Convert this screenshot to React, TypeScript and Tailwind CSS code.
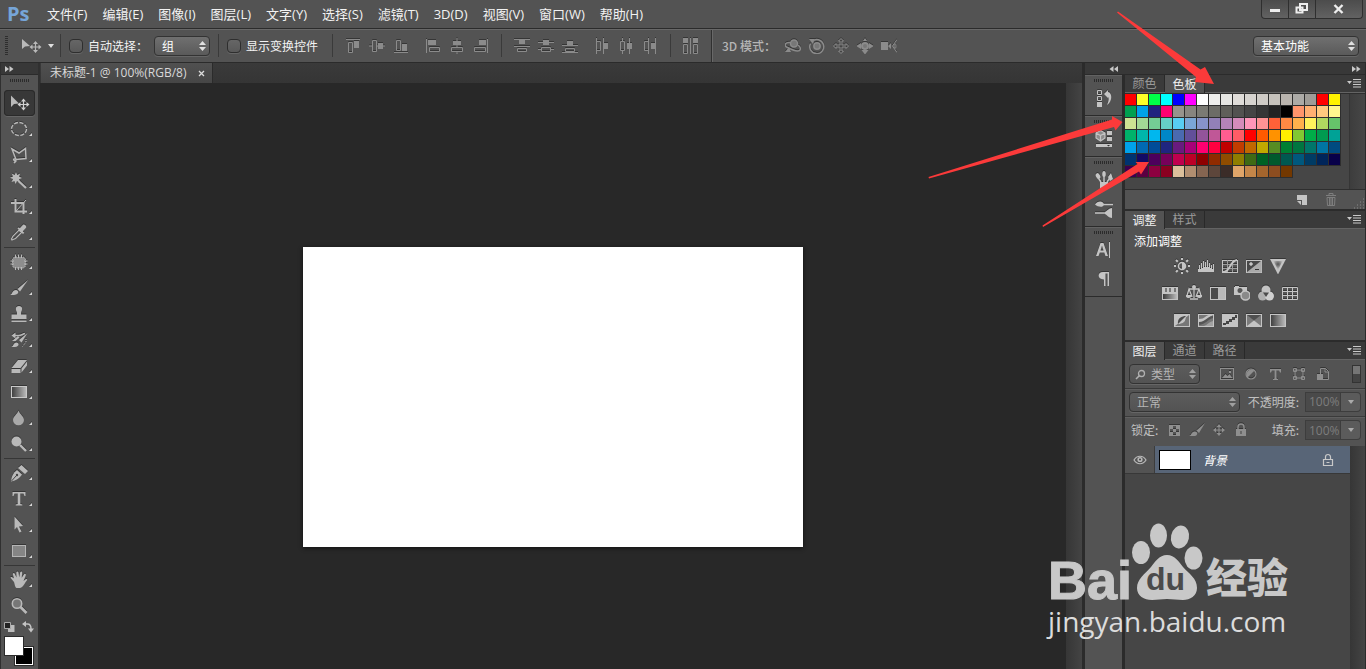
import { useState, type ReactNode } from 'react';

const FONT = "font-['Open_Sans','Noto_Sans_CJK_SC',sans-serif]";
const CJK = "font-['Noto_Sans_CJK_SC','Open_Sans',sans-serif]";

const MENUS = ['文件(F)', '编辑(E)', '图像(I)', '图层(L)', '文字(Y)', '选择(S)', '滤镜(T)', '3D(D)', '视图(V)', '窗口(W)', '帮助(H)'];

const SWATCHES = `
ff0000 ffff28 00ff48 00ffff 0000ff ff00ff ffffff ededeb e6e6e3 dfdcd8 d6d3cf cfcbc6 c6c2bc b9b4ae acaaa6 9f9c97 ff0000 fff200
00a050 00a2e8 21217f ff0070 96938c 87857f 7a7a73 6c6c66 5f5f5a 525250 454545 363636 232323 000000 ff956c ffb072 ffc97f fff68f
cde393 a2d896 74cc95 66cfc6 58cef2 7aa6d6 8793c9 9280b8 b583b8 d58bba ff96b9 ff9394 ff6138 ff8a44 ffb04c fff25c afd860 66c46a
00b26a 00b6ab 00b7ee 0087c8 4a6ab0 624f9a 93549a c05797 ff5d90 ff5c66 ff0000 ff5a00 ff9200 ffee00 82c832 00ad48 009a50 00a296
00a2ea 0069b2 004c99 1f2580 691b7e a80078 ff0070 ff0040 c00000 c23c00 c16700 c1a900 568c23 007f32 007540 00756a 0075a4 004b80
003370 130a64 4d005c 77005a c0004e bd0027 8e0000 902b00 8f4c00 8f7e00 3f6a14 006124 00592d 005850 00587d 003b64 00255a 080049
3c0050 5a0042 8c0040 8a0020 dcc09c b18e70 856551 5d463b 3b2c28 e0a569 c48649 a4652d 8c4d20 733800`
  .trim()
  .split(/\s+/)
  .map((c) => '#' + c);

function Svg({ w, h, children, className = '' }: { w: number; h: number; children: ReactNode; className?: string }) {
  return (
    <svg width={w} height={h} viewBox={`0 0 ${w} ${h}`} fill="none" stroke="none" className={`shrink-0 ${className}`} aria-hidden="true">
      {children}
    </svg>
  );
}

const G = '#b9b9b9';

const crossArrows = (cx: number, cy: number, c: string) => (
  <g transform={`translate(${cx} ${cy})`}>
    <path d="M0-4V4M-4 0H4" stroke={c} strokeWidth="1.200" />
    <path d="M0-6 2.500-3h-5ZM0 6 2.500 3h-5ZM-6 0-3-2.500v5ZM6 0 3-2.500v5Z" fill={c} />
  </g>
);

type Tool = { name: string; icon: ReactNode; fly?: boolean };

const GROUPS: Tool[][] = [
  [
    { name: '移动工具', fly: false, icon: <><path d="M7 5.500V17l3-3 5-.5Z" fill={G} />{crossArrows(19.500, 14.500, '#d0d0d0')}</> },
    { name: '椭圆选框工具', icon: <ellipse cx="15" cy="13" rx="7.500" ry="6.500" stroke={G} strokeWidth="1.400" strokeDasharray="4 1.500" /> },
    { name: '多边形套索工具', icon: <><path d="M8 7 15 11l6.500-4.500.5 10-10 1ZM12 17c-2.500-1-3 1-1.500 1.500S13 18 10 21" stroke={G} strokeWidth="1.500" /></> },
    { name: '魔棒工具', icon: <><path d="m12 4 1.200 3 3-1.500L15 8.500l3 1.500-3 1.200 1 3-3-1.200L11.500 16l-1-3-3 1 1.500-3-3-1.300 3-1.200-1.300-3 3 1.500Z" fill={G} /><path d="m14.500 13 7.500 7" stroke={G} strokeWidth="2.200" /></> },
    { name: '裁剪工具', icon: <><path d="M11.500 5v12.500H23M7 9h12.500v11" stroke={G} strokeWidth="2" /><path d="m12 17 10-11" stroke={G} /></> },
    { name: '吸管工具', icon: <><path d="M9 19.500 8 20l-.5-1 1.500-3 6-6 2.500 2.500-6 6Z" stroke={G} strokeWidth="1.200" /><path d="m13.500 8.500 5.500 5.500 1.300-1.300-1.500-1.500 3.200-3.500c1-1.500-1.500-4-3-3l-3.200 3.500-1-1Z" fill={G} /></> },
  ],
  [
    { name: '修补工具', icon: <><rect x="8.500" y="8" width="13" height="11" rx="3" fill="#8d8d8d" stroke={G} strokeDasharray="1.500 1" /><path d="M11.500 5.500V9m3-3.500V9m3-3.500V9m-6 9v3m3-3v3m3-3v3M6.500 12H10m-3.500 3H10m10-3h3.500m-3.500 3h3.500" stroke={G} /></> },
    { name: '画笔工具', icon: <><path d="M24 5 13.500 14l2.500 2.500Z" fill={G} /><path d="M6 20c2.500-.5 2-5 6-5 3 .5 3 3.500 0 4.500-2 .7-4 .7-6 .5Z" fill={G} /></> },
    { name: '仿制图章工具', icon: <path d="M15 5c4 0 3.500 4 2 6v2.500h5.500V18h-15v-4.500H13V11c-1.500-2-2-6 2-6ZM7.500 19.500h15V21h-15Z" fill={G} /> },
    { name: '历史记录画笔工具', icon: <><path d="M23.500 6 15 13l2.500 2.500ZM7 20c3-.5 2-4.500 5.500-4.500 3 .5 2.500 3.500 0 4.200-2 .5-4 .5-5.500.3Z" fill={G} /><path d="M9 8.500h5.500c3 0 4-1.500 6.500-2" stroke={G} strokeWidth="1.500" /><path d="M11.500 5.500v6L7.500 8.500ZM14 9l1.500 1.500-4 3.500H8Z" fill={G} /><path d="M22 12v3l-3.500 4.500" stroke={G} strokeDasharray="1 1" /></> },
    { name: '橡皮擦工具', icon: <><path d="M7.500 15 14 7h9l-6.500 8ZM7.500 16h9v4h-9ZM17.500 15.500 23 8.500v4l-5.500 7Z" fill={G} /></> },
    { name: '渐变工具', icon: <rect x="7.500" y="7.500" width="15" height="11" fill="url(#gradH)" stroke="#c9c9c9" /> },
    { name: '模糊工具', icon: <path d="M14.500 5.500c1.500 4 5.500 6 5.500 9.500a5.500 5.200 0 0 1-11 0c0-3.500 4-5.500 5.500-9.500Z" fill="#a9a9a9" /> },
    { name: '减淡工具', icon: <><circle cx="12.500" cy="10.500" r="5" fill={G} /><path d="m16 14 6 6" stroke={G} strokeWidth="2.400" /></> },
  ],
  [
    { name: '钢笔工具', icon: <><path d="M7 21.500c.5-5 2-8.500 6-11.500l5 4.500c-2.500 3.500-5.500 6-11 7Z" fill={G} /><path d="m7.500 21 5-5.500" stroke="#444" /><circle cx="13" cy="15" r="1.200" fill="#444" /><path d="m14 8 3.500-3 6.500 6-3 3Z" fill={G} /></> },
    { name: '横排文字工具', icon: <path d="M8.500 6h13v4h-1l-1-2.500h-3.200V18l2 .5v1h-6.600v-1l2-.5V7.500h-3.200l-1 2.500h-1Z" fill={G} /> },
    { name: '路径选择工具', icon: <path d="M10.500 4.500v13l2.500-2.500 2.500 5.500 2-1-2.500-5 4-.5Z" fill={G} /> },
    { name: '矩形工具', icon: <rect x="8.500" y="7.500" width="13" height="11" fill="#858585" stroke="#b5b5b5" /> },
  ],
  [
    { name: '抓手工具', icon: <path d="M10 15 6.500 10.800c.3-1.300 1.500-1 3.500.7L8.800 7c.5-1.400 1.700-1 2.200.3l1.500 3.200-.2-5c.3-1.400 1.900-1.400 2.200 0l.7 4.700 1-5c.6-1.200 2-.8 2 .5l-.5 5L20.200 7c1-.8 2 0 1.600 1.200L19.500 14l2.500-2c1.200-.2 1.500.5.8 1.500-2.300 2.500-3 6.500-6.800 7.500h-3.500c-1.500-.5-1.500-3-2.500-6Z" fill={G} /> },
    { name: '缩放工具', fly: false, icon: <><circle cx="13" cy="10.500" r="4.700" fill="#777" stroke={G} strokeWidth="1.600" /><path d="m16.500 14 6 6" stroke={G} strokeWidth="2.600" /></> },
  ],
];

const RIM = 'drop-shadow-[0_-1px_0_#363636]';

function ToolButton({ tool, active, onClick }: { tool: Tool; active: boolean; onClick: () => void }) {
  return (
    <button type="button" aria-label={tool.name} onClick={onClick} className={`block h-[26px] w-[31px] rounded-sm ${active ? 'bg-[#383838] shadow-[inset_0_0_0_1px_#2a2a2a,0_1px_0_#666]' : ''}`}>
      <Svg w={31} h={26} className={RIM}>
        {tool.icon}
        {tool.fly !== false && <path d="M28 17v3h-3Z" fill="#d8d8d8" />}
      </Svg>
    </button>
  );
}

const DOTS = 'bg-[repeating-linear-gradient(90deg,#2b2b2b_0_1px,transparent_1px_2px)]';

function Grip() {
  return <div className={`mx-auto h-[3px] w-[19px] ${DOTS}`} />;
}

function Chevrons({ left = false }: { left?: boolean }) {
  return (
    <Svg w={9} h={6} className={left ? 'rotate-180' : ''}>
      <path d="M0 0 4 3 0 6ZM4.500 0l4 3-4 3Z" fill="#c8c8c8" />
    </Svg>
  );
}

function Sep() {
  return <div className="h-[23px] w-px shrink-0 bg-[#3a3a3a]" />;
}

function UpDown({ dim = false }: { dim?: boolean }) {
  return (
    <Svg w={7} h={10} className="pointer-events-none absolute right-1 top-1/2 -translate-y-1/2">
      <path d="M3.500 0 7 4H0ZM0 6h7L3.500 10Z" fill={dim ? '#a0a0a0' : '#e0e0e0'} />
    </Svg>
  );
}

function PickList({ label, options, className, dim = false }: { label: string; options: string[]; className: string; dim?: boolean }) {
  return (
    <div className="relative shrink-0">
      <select aria-label={label} className={`block h-5 appearance-none rounded-sm border border-[#333] bg-linear-to-b text-[12px] leading-4 shadow-[0_1px_0_#666] outline-none ${CJK} ${dim ? 'from-[#5c5c5c] to-[#535353] text-[#b5b5b5]' : 'from-[#707070] to-[#5a5a5a] text-white'} ${className}`}>
        {options.map((o) => <option key={o}>{o}</option>)}
      </select>
      <UpDown dim={dim} />
    </div>
  );
}

function Check({ id, label }: { id: string; label: string }) {
  return (
    <div className="flex items-center gap-[5px]">
      <input id={id} type="checkbox" className="size-[14px] appearance-none rounded-sm border border-[#2e2e2e] bg-linear-to-b from-[#666] to-[#595959] shadow-[0_1px_0_#666] checked:from-[#ddd] checked:to-[#bbb]" />
      <label htmlFor={id} className={`whitespace-nowrap text-[12px] text-[#f2f2f2] ${CJK}`}>{label}</label>
    </div>
  );
}

const A = '#8b8b8b';
const slot = (name: string, icon: ReactNode) => (
  <button key={name} type="button" aria-label={name} className="flex h-6 w-6 items-center justify-center">
    <Svg w={16} h={16} className={RIM}>{icon}</Svg>
  </button>
);

const ALIGN_1 = [
  slot('顶对齐', <><path d="M1 1.500h14M3.500 4.500h4v10h-4z" stroke={A} /><path d="M9 3h5v7H9z" fill={A} /></>),
  slot('垂直居中对齐', <><path d="M0 8h3m5 0h2m4 0h2M3.500 2.500h4v11h-4z" stroke={A} /><path d="M9 5h5v6H9z" fill={A} /></>),
  slot('底对齐', <><path d="M1 14.500h14M3.500 2.500h4v10h-4z" stroke={A} /><path d="M9 6h5v7H9z" fill={A} /></>),
];
const ALIGN_2 = [
  slot('左对齐', <><path d="M1.500 1v14M4.500 9.500h10v4h-10z" stroke={A} /><path d="M3 2h8v5H3z" fill={A} /></>),
  slot('水平居中对齐', <><path d="M8 0v3m0 4v3m0 4v2M2.500 9.500h11v4h-11z" stroke={A} /><path d="M4 3h8v4H4z" fill={A} /></>),
  slot('右对齐', <><path d="M14.500 1v14M1.500 9.500h11v4h-11z" stroke={A} /><path d="M6 2h7v5H6z" fill={A} /></>),
];
const ALIGN_3 = [
  slot('按顶分布', <><path d="M0 1.500h16M0 8.500h16M3.500 10.500h9v3h-9z" stroke={A} /><path d="M5 2h6v4H5z" fill={A} /></>),
  slot('垂直居中分布', <><path d="M0 4.500h16M0 11.500h3m10 0h3M3.500 9.500h9v4h-9z" stroke={A} /><path d="M5 2h6v5H5z" fill={A} /></>),
  slot('按底分布', <><path d="M0 7.500h16M0 14.500h16M3.500 10.500h9v3h-9z" stroke={A} /><path d="M5 3h6v4H5z" fill={A} /></>),
];
const ALIGN_4 = [
  slot('按左分布', <><path d="M2.500 0v16M9.500 0v16M2.500 3.500h4v9h-4z" stroke={A} /><path d="M10 5h4v6h-4z" fill={A} /></>),
  slot('水平居中分布', <><path d="M4.500 0v3m0 10v3M11.500 0v16M2.500 3.500h4v9h-4z" stroke={A} /><path d="M9 5h5v6H9z" fill={A} /></>),
  slot('按右分布', <><path d="M6.500 0v16M13.500 0v16M2.500 3.500h4v9h-4z" stroke={A} /><path d="M9 5h4v6H9z" fill={A} /></>),
];
const AUTO = slot('自动对齐图层', <><path d="M0 0h5v5H0zM10 0h5v5h-5z" fill={A} /><path d="M.500 6.500h4v9h-4zM10.500 6.500h4v9h-4zM7.500 0v16" stroke={A} /></>);
const MODES = [
  slot('旋转 3D 对象', <><path d="M5 4.500C-.500 4-1 8 2.500 9.500c3 1.500 7 3.500 10 3.500 4 0 3.500-4 .5-6" stroke={A} strokeWidth="1.500" /><circle cx="9" cy="5.500" r="3.500" fill="#777" stroke={A} strokeWidth="1.500" /><path d="M0 14h6L4 9Z" fill={A} /></>),
  slot('滚动 3D 对象', <><path d="M3 3.500a7 7 0 1 1-1.500 2" stroke={A} strokeWidth="1.500" /><circle cx="8" cy="8" r="3.200" fill="#777" stroke={A} strokeWidth="1.500" /><path d="M0 1h5.500L4 6Z" fill={A} /></>),
  slot('拖动 3D 对象', <path d="M8 .500 10.500 3H9v4h4V5.500L15.500 8 13 10.500V9H9v4h1.500L8 15.500 5.500 13H7V9H3v1.500L.500 8 3 5.500V7h4V3H5.500Z" stroke={A} />),
  slot('滑动 3D 对象', <><circle cx="8" cy="8" r="3" fill="#777" stroke={A} strokeWidth="2" /><path d="M-1 8 4 5v6ZM17 8l-5-3v6ZM8 16.500 4.500 12h7ZM8 0l2 3H6Z" fill={A} /></>),
  slot('缩放 3D 对象', <><path d="M-1 4h8v8h-8zM7 8l3-3v6Z" fill={A} /><path d="m16 1.500-4.500 6.500 4.500 6.500" stroke={A} /><ellipse cx="14" cy="8" rx="1" ry="2.500" stroke={A} /></>),
];

function PanelTabs({ tabs, active }: { tabs: string[]; active: number }) {
  return (
    <div className="flex h-[18px] shrink-0 items-stretch border-b border-[#636363] bg-[#3a3a3a]">
      {tabs.map((t, i) => (
        <button key={t} type="button" className={`w-10 border-r border-[#292929] pb-px text-center text-[12px] leading-4 ${CJK} ${i === active ? '-mb-px bg-[#535353] text-[#f0f0f0]' : 'text-[#9a9a9a]'}`}>
          {t}
        </button>
      ))}
      <button type="button" aria-label="面板菜单" className="ml-auto mr-1 flex items-center">
        <Svg w={14} h={9}>
          <path d="M0 2h5L2.500 5ZM6 0h8v1H6zM6 2.500h8v1H6zM6 5h8v1H6zM6 7.500h8v1H6z" fill="#c9c9c9" />
        </Svg>
      </button>
    </div>
  );
}

const C = '#c4c4c4';
const box = <rect x=".5" y="2.500" width="15" height="12" fill="#777" stroke={C} />;
const ADJ = [
  [
    slot('亮度/对比度', <><circle cx="8" cy="8" r="3.500" stroke={C} strokeWidth="1.500" /><path d="M8 4.500a3.500 3.500 0 0 1 0 7Z" fill={C} /><path d="M8-.500v2.500M8 14v2.500M-.500 8H2M14 8h2.500M2 2l1.800 1.800M12.200 12.200 14 14M2 14l1.800-1.800M12.200 3.800 14 2" stroke={C} strokeWidth="2" /></>),
    slot('色阶', <path d="M-1 14V8h1v3h1V7h1v4h1V5h1v5h1V3h1v6h1V4h1v5h1V2h1v7h1V5h1v5h1V7h1v4h1V6h1v8Z" fill={C} />),
    slot('曲线', <><rect x=".5" y="2.500" width="15" height="12" stroke={C} /><path d="M5.500 2v12M10.500 2v12M1 6.500h14M1 10.500h14" stroke="#9c9c9c" /><path d="M1 14c8 0 6-11 14-12" stroke={C} strokeWidth="1.900" /></>),
    slot('曝光度', <><rect x=".5" y="2.500" width="15" height="12" fill="#484848" stroke={C} /><path d="M15.500 2.500v12H.500Z" fill="#aaa" /><path d="M3 6h4M5 4v4" stroke="#eee" /><path d="M9 11.500h4" stroke="#333" /></>),
    slot('自然饱和度', <><path d="M0 1h16L8 16.500Z" fill={C} /><path d="M3.500 3h9L8 12Z" fill="url(#spot)" /></>),
  ],
  [
    slot('色相/饱和度', <><rect x="0" y="2" width="16" height="13" fill={C} /><path d="M3 3h2v4H3zM7 3h2v4H7zM12 3h2v4h-2z" fill="#777" /><path d="M1 9h14v5H1z" fill="url(#gradH)" /></>),
    slot('色彩平衡', <><path d="M8 1v12M2.500 4h11M4 14h8M3 4 .800 11h5ZM13 4l-2.800 7h5Z" stroke={C} strokeWidth="1.300" /><path d="M-.500 10h6.500c0 4-6.500 4-6.500 0ZM10 10h6.500c0 4-6.500 4-6.500 0Z" fill={C} /><circle cx="8" cy="2" r="2" fill={C} /></>),
    slot('黑白', <><rect x=".5" y="2.500" width="15" height="12" fill="#b9b9b9" stroke={C} /><path d="M1 3h7v11H1z" fill="#4a4a4a" /></>),
    slot('照片滤镜', <><path d="M-1 2h2V1h4v1h8v8H-1Z" fill={C} /><circle cx="6" cy="5.500" r="2.500" fill="#555" /><circle cx="11.500" cy="10.500" r="4.500" fill="#8a8a8a" stroke={C} strokeWidth="1.500" /></>),
    slot('通道混合器', <><circle cx="8" cy="5" r="4.500" fill={C} /><circle cx="4.500" cy="11" r="4.500" fill="#b0b0b0" /><circle cx="11.500" cy="11" r="4.500" fill="#cfcfcf" /><path d="M5 7.500h6L8 12Z" fill="#4c4c4c" /></>),
    slot('颜色查找', <path d="M.500 2.500h15v12H.500zM.500 6.500h15M.500 10.500h15M5.500 2.500v12M10.500 2.500v12" stroke={C} />),
  ],
  [
    slot('反相', <>{box}<path d="M1 3h14L1 14Z" fill={C} /><path d="M4 12c-1-6 4-8 8-8 0 6-3 8-8 8Z" fill="#4d4d4d" /><path d="m4 12 8-8c0 6-3 8-8 8Z" fill={C} /></>),
    slot('色调分离', <>{box}<path d="M1 7c6 0 7-4 10-4h4C9 6 8 11 1 12Z" fill={C} /><path d="M1 10c7 0 8-6 14-6v2C9 8 8 12 1 13Z" fill="#555" /><path d="M6 14c3-1 5-4 9-5v5Z" fill="#a2a2a2" /></>),
    slot('阈值', <><rect x=".5" y="2.500" width="15" height="12" fill={C} stroke={C} /><path d="M1 11h3V9h3V7h3V5h3V3h2v3h-2v2h-3v2H7v2H4v1H1Z" fill="#454545" /></>),
    slot('可选颜色', <><rect x=".5" y="2.500" width="15" height="12" fill="#7b7b7b" stroke={C} /><path d="m1 3 7 5.500L15 3Z" fill="#4f4f4f" /><path d="m1 14 7-5.500 7 5.500Z" fill={C} /></>),
    slot('渐变映射', <rect x=".5" y="2.500" width="15" height="12" fill="url(#gradH)" stroke={C} />),
  ],
];

const L = '#8f8f8f';
const FILTERS = [
  slot('像素图层', <><rect x="1.500" y="2.500" width="13" height="11" stroke={L} /><path d="m3 12 3.500-4 2 2 2-2 3 4ZM10 5h2v2h-2z" fill={L} /></>),
  slot('调整图层', <><circle cx="8" cy="8" r="5" stroke={L} strokeWidth="1.200" /><path d="M4.500 11.500a5 5 0 0 1 7-7Z" fill={L} /></>),
  slot('文字图层', <path d="M3 3h11v3.500h-1L12 4.500H9.500v8l1.500.5v1H6v-1l1.500-.5v-8H5l-1 2H3Z" fill={L} />),
  slot('形状图层', <path d="M4 4h8v8H4zM2.500 2.500h3v3h-3zM10.500 2.500h3v3h-3zM2.500 10.500h3v3h-3zM10.500 10.500h3v3h-3z" fill="#535353" stroke={L} />),
  slot('智能对象', <><path d="M5.500 8V2.500h5l3 3v8H8M10 2.500V6h3.500" stroke={L} /><path d="M2 8h6v6H2z" fill={L} /></>),
];
const LOCK = (c: string) => <><path d="M3 7h10v7H3z" fill={c} /><path d="M5 7V5a3 3 0 0 1 6 0v2" stroke={c} strokeWidth="1.500" /><path d="M7.500 9v3h1V9Z" fill="#444" /></>;
const LOCKS = [
  slot('锁定透明像素', <><rect x="2.500" y="3.500" width="10" height="10" stroke={L} /><path d="M3 4h3v3H3zM9 4h3v3H9zM6 7h3v3H6zM3 10h3v3H3zM9 10h3v3H9z" fill={L} /></>),
  slot('锁定图像像素', <><path d="M16 1 7.500 8.500 10 11Z" fill={L} /><path d="M0 14c2.500-.5 2.500-5 6-4.500 3.500.5 2.500 4 0 4.500H0Z" fill={L} /></>),
  slot('锁定位置', crossArrows(8, 8, L)),
  slot('锁定全部', LOCK(L)),
];

function Percent({ id, label }: { id: string; label: string }) {
  return (
    <div className="ml-auto flex items-center">
      <label htmlFor={id} className={`pr-[6px] text-[12px] text-[#c0c0c0] ${CJK}`}>{label}</label>
      <input id={id} defaultValue="100%" className="h-5 w-9 border border-[#3d3d3d] bg-[#4a4a4a] pl-[3px] text-[12px] text-[#7d7d7d] outline-none" />
      <button type="button" aria-label={label + '滑块'} className="flex h-5 w-5 items-center justify-center rounded-r-sm border border-l-0 border-[#3d3d3d] bg-[#5b5b5b]">
        <Svg w={6} h={4}><path d="M0 0h6L3 4Z" fill="#aaa" /></Svg>
      </button>
    </div>
  );
}

function StripGroup({ children }: { children: ReactNode }) {
  return <div className="flex flex-col border-b border-[#2b2b2b] bg-[#535353] pt-1 pb-1 shadow-[inset_0_1px_0_#626262]"><Grip />{children}</div>;
}

function StripIcon({ name, children }: { name: string; children: ReactNode }) {
  return (
    <button type="button" aria-label={name} className="flex h-[29px] items-center justify-center pt-[3px]">
      <Svg w={18} h={18} className={RIM}>{children}</Svg>
    </button>
  );
}

function Watermark() {
  return (
    <div className="pointer-events-none absolute right-[74px] bottom-[28px] h-[118px] w-[244px] text-[#c8c8c8]">
      <span className="absolute top-[27px] left-0 font-['Liberation_Sans',sans-serif] text-[54px] leading-[60px] font-bold [-webkit-text-stroke:1px_#c8c8c8]">Bai</span>
      <svg width="74" height="80" viewBox="0 0 74 80" className="absolute top-0 left-[83px]" aria-hidden="true">
        <g fill="#c8c8c8">
          <ellipse cx="10" cy="29.500" rx="9" ry="11.500" />
          <ellipse cx="27.500" cy="12.500" rx="8.500" ry="12" />
          <ellipse cx="49" cy="14" rx="9" ry="11.500" transform="rotate(12 49 14)" />
          <ellipse cx="62.500" cy="35" rx="9" ry="11.500" />
          <path d="M36 32c8 0 12 7 16 12 6 7 14 11 14 21 0 8-7 12-14 12-6 0-10-1-16-1s-9 1-15 1C13 77 6 73 6 65c0-9 8-14 14-21 4-5 8-12 16-12Z" />
        </g>
        <text x="15" y="67" fontFamily="Liberation Sans, sans-serif" fontWeight="700" fontSize="32" fill="#4b4b4b">du</text>
      </svg>
      <span className="absolute top-[22px] left-[158px] font-['Noto_Sans_CJK_SC',sans-serif] text-[41px] leading-[60px] font-black whitespace-nowrap">经验</span>
      <span className="absolute top-[80px] left-0 font-['Open_Sans',sans-serif] text-[28px] leading-[36px] font-medium text-[#dcdcdc]">jingyan.baidu.com</span>
    </div>
  );
}

export default function App() {
  const [tool, setTool] = useState('移动工具');
  return (
    <div className={`relative flex min-h-screen flex-col overflow-hidden bg-[#282828] text-[12px] text-white select-none ${FONT}`}>
      <svg width="0" height="0" className="absolute" aria-hidden="true">
        <defs>
          <linearGradient id="gradH"><stop offset="0" stopColor="#3c3c3c" /><stop offset="1" stopColor="#bdbdbd" /></linearGradient>
          <radialGradient id="spot" cy=".35"><stop offset="0" stopColor="#555" /><stop offset="1" stopColor="#b0b0b0" /></radialGradient>
        </defs>
      </svg>

      <header className="flex h-[29px] shrink-0 items-center border-b border-[#2b2b2b] bg-[#535353] pb-px">
        <span className="w-[40px] pl-[7px] text-[20px] leading-6 font-bold text-[#76a5d8]">Ps</span>
        <nav className="flex gap-[15px] pl-[7px]">
          {MENUS.map((m) => <button key={m} type="button" className="text-[13px] leading-5 whitespace-nowrap text-[#f2f2f2]">{m}</button>)}
        </nav>
        <div className="mr-[3px] ml-auto flex h-[19px] self-start overflow-hidden rounded-b-sm border border-t-0 border-[#2f2f2f] bg-linear-to-b from-[#4c4c4c] to-[#626262]">
          <button type="button" aria-label="最小化" className="flex w-[27px] items-center justify-center border-r border-[#2f2f2f]"><Svg w={12} h={10}><path d="M1 5h10v3H1z" fill="#eee" /></Svg></button>
          <button type="button" aria-label="还原" className="flex w-[27px] items-center justify-center border-r border-[#2f2f2f]"><Svg w={14} h={12}><path d="M5 1h7v6H5zM1.500 4.500h6v5h-6z" fill="#4f4f4f" stroke="#eee" strokeWidth="2" /></Svg></button>
          <button type="button" aria-label="关闭" className="flex w-[46px] items-center justify-center"><Svg w={12} h={10}><path d="m1.500 1 8 8M9.500 1l-8 8" stroke="#eee" strokeWidth="2.400" /></Svg></button>
        </div>
      </header>

      <div className="flex h-[34px] shrink-0 items-center gap-2 border-t border-b border-t-[#686868] border-b-[#2b2b2b] bg-[#535353] pb-px pl-[5px]">
        <div className="h-5 w-[3px] bg-[repeating-linear-gradient(180deg,#2e2e2e_0_1px,transparent_1px_2px)]" />
        <button type="button" aria-label="当前工具" className="-mr-0.5 ml-1 flex h-6 w-[34px] items-center justify-between">
          <Svg w={22} h={18}><path d="M2 2v10l3-2.500 5-.5Z" fill={G} />{crossArrows(15.500, 10, G)}</Svg>
          <Svg w={6} h={4}><path d="M0 0h6L3 4Z" fill="#e0e0e0" /></Svg>
        </button>
        <Sep />
        <div className="flex items-center gap-[6px]">
          <Check id="auto-select" label="自动选择：" />
          <PickList label="自动选择" options={['组', '图层']} className="w-[56px] pl-[7px]" />
        </div>
        <Sep />
        <div className="pr-[6px]"><Check id="show-transform" label="显示变换控件" /></div>
        <Sep />
        <div className="flex">{ALIGN_1}</div>
        <div className="flex">{ALIGN_2}</div>
        <Sep />
        <div className="flex">{ALIGN_3}</div>
        <div className="flex">{ALIGN_4}</div>
        <Sep />
        {AUTO}
        <div className="-mb-px h-8 w-px bg-[#303030] shadow-[1px_0_0_#686868]" />
        <div className="flex items-center gap-[5px] pl-[2px]">
          <span className={`text-[12px] font-medium whitespace-nowrap text-[#b5b5b5] ${CJK}`}>3D 模式：</span>
          <div className="flex">{MODES}</div>
        </div>
        <div className="mr-[7px] ml-auto">
          <PickList label="工作区" options={['基本功能', '绘画', '摄影']} className="w-[106px] pl-[7px]" />
        </div>
      </div>

      <div className="flex grow">
        <aside className="w-10 shrink-0 border-r-2 border-l border-[#303030] bg-[#535353]">
          <div className="flex h-3 items-center border-b border-[#2b2b2b] bg-[#383838] pl-1"><Chevrons /></div>
          <div className="h-[15px] pt-1"><Grip /></div>
          <div className="flex flex-col pl-[3px]">
            {GROUPS.map((g, i) => (
              <div key={i}>
                {i > 0 && <div className="mr-[3px] h-[3px] py-px"><div className="h-px bg-[#363636]" /></div>}
                {g.map((t) => <ToolButton key={t.name} tool={t} active={tool === t.name} onClick={() => setTool(t.name)} />)}
              </div>
            ))}
          </div>
          <div className="flex h-4 justify-between pr-1 pl-[3px]">
            <button type="button" aria-label="默认前景色和背景色"><Svg w={11} h={12}><path d="M4 4h6.500v7H4z" fill="#bdbdbd" /><path d="M.500 1.500h6v6h-6z" fill="#222" stroke="#aaa" /></Svg></button>
            <button type="button" aria-label="切换前景色和背景色"><Svg w={12} h={12}><path d="M3 3h2.500C8 3 9 5 9 8" stroke={C} strokeWidth="1.500" /><path d="m0 3 4-3v6ZM6 7.500h6L9 11.500Z" fill={C} /></Svg></button>
          </div>
          <div className="relative h-[32px]">
            <button type="button" aria-label="背景色" className="absolute top-[12px] left-[14px] size-[18px] border border-white bg-black shadow-[0_0_0_1px_#2b2b2b]" />
            <button type="button" aria-label="前景色" className="absolute top-[2px] left-[4px] size-[18px] bg-white shadow-[0_0_0_1px_#2b2b2b]" />
          </div>
        </aside>

        <main className="flex min-w-0 grow flex-col">
          <div className="flex h-5 shrink-0 bg-linear-to-b from-[#3a3a3a] to-[#353535] pl-px">
            <div className="flex items-center gap-3 border-r border-[#2b2b2b] bg-linear-to-b from-[#505050] to-[#464646] pr-[7px] pl-[9px]">
              <span className="text-[12px] leading-5 whitespace-nowrap text-[#d8d8d8]">未标题-1 @ 100%(RGB/8)</span>
              <button type="button" aria-label="关闭文档"><Svg w={7} h={7}><path d="m1 1 5 5M6 1 1 6" stroke="#ddd" strokeWidth="1.300" /></Svg></button>
            </div>
          </div>
          <div className="flex grow">
            <div className="flex grow items-center justify-center pt-[42px]">
              <div className="h-[300px] w-[500px] bg-white shadow-[0_1px_4px_#111]" />
            </div>
            <div className="w-4 shrink-0 bg-linear-to-r from-[#363636] to-[#444]" />
          </div>
        </main>

        <div className="flex w-[284px] shrink-0 flex-col border-r border-l-3 border-[#2b2b2b] bg-[#2b2b2b]">
          <div className="flex h-3 shrink-0 items-center border-b border-[#2b2b2b] bg-[#383838]">
            <div className="flex w-[37px] justify-end pr-1"><Chevrons left /></div>
            <div className="ml-auto pr-1"><Chevrons /></div>
          </div>
          <div className="flex grow gap-[3px]">
            <div className="w-[37px] shrink-0 bg-[#535353]">
              <StripGroup>
                <StripIcon name="历史记录"><path d="M2.500 1.500h4v4h-4zM2.500 7.500h4v4h-4z" stroke={C} /><path d="M2 13h5v5H2z" fill={C} /><path d="M9 5l4-4v2c5 1 4 10-1 13 2-5 2-7 1-8v1Z" fill={C} /></StripIcon>
              </StripGroup>
              <StripGroup>
                <StripIcon name="属性"><path d="m1 3 4.500-2.500L10 3v5l-4.500 3L1 8Z" fill="#8c8c8c" /><path d="m1 3 4.500-2.500L10 3v5l-4.500 3L1 8ZM1 3l4.500 2.500L10 3M5.500 5.500V11" stroke={C} strokeWidth="1.200" /><path d="M12 1h5v4h-5zM12 7h5v4h-5zM1 14h16v3H1z" fill={C} /><path d="M12 15h3l-1.500 1.500Z" fill="#333" /></StripIcon>
              </StripGroup>
              <StripGroup>
                <StripIcon name="画笔预设"><path d="M5 11h8v7H5z" fill={C} /><path d="M6 11 2 5M9 11V2M12 11l4-6" stroke={C} strokeWidth="1.500" /><ellipse cx="3" cy="5" rx="2" ry="3" fill={C} transform="rotate(-30 3 5)" /><ellipse cx="9" cy="3" rx="1.800" ry="3" fill={C} /><path d="m13 6 3-4 2 6-3 2Z" fill={C} /></StripIcon>
                <StripIcon name="画笔"><path d="M8 4.500h10" stroke={C} strokeWidth="1.500" /><path d="M0 4.500C2 1 8 0 9 4.500 8 8 3 7 0 4.500Z" fill={C} /><path d="M0 13h11" stroke={C} strokeWidth="1.500" /><path d="M10 12c2-1 4-4 7-4v10c-3 0-5-3-7-4Z" fill={C} /></StripIcon>
              </StripGroup>
              <StripGroup>
                <StripIcon name="字符"><path d="M5.500 2h3L13 15h-2.500l-1.200-3.500H4.800L3.500 15H1ZM5.500 9.500h3L7 4.500Z" fill={C} fillRule="evenodd" /><path d="M14.500 1v16" stroke={C} /></StripIcon>
                <StripIcon name="段落"><path d="M14 2H8C2 2 2 9.500 9 9.500V16h1.500V3.500h2V16H14Z" fill={C} /></StripIcon>
              </StripGroup>
            </div>

            <div className="flex min-w-0 grow flex-col">
              <section className="shrink-0">
                <PanelTabs tabs={['颜色', '色板']} active={1} />
                <div className="flex h-[96px] border-t border-[#2e2e2e] bg-[#464646]">
                  <div className="grid grid-cols-[repeat(18,12px)] content-start">
                    {SWATCHES.map((c, i) => (
                      <button key={i} type="button" aria-label={c} className="size-3 border-r border-b border-[#2e2e2e]" style={{ backgroundColor: c }} />
                    ))}
                  </div>
                  <div className="ml-auto w-4 border-l border-[#363636] bg-linear-to-r from-[#3d3d3d] to-[#474747]" />
                </div>
                <div className="flex h-5 items-center justify-end gap-[17px] border-t border-[#2e2e2e] bg-[#535353]">
                  <button type="button" aria-label="新建色板"><Svg w={12} h={12}><path d="M1 1h10v10H6V6H1Z" fill={C} /><path d="M1 7h4v4Z" fill={C} /></Svg></button>
                  <button type="button" aria-label="删除色板"><Svg w={12} h={13}><path d="M1 2.500h10M4 2V.500h4V2M2 4.500h8l-.5 8h-7ZM4.500 5v7M7.500 5v7M6 5v7" stroke="#7e7e7e" /></Svg></button>
                  <Svg w={11} h={12} className="mt-2"><path d="M9 1h1M6 4h1m2 0h1M3 7h1m2 0h1m2 0h1M0 10h1m2 0h1m2 0h1m2 0h1" stroke="#8a8a8a" /></Svg>
                </div>
              </section>

              <section className="mt-[2px] shrink-0">
                <PanelTabs tabs={['调整', '样式']} active={0} />
                <div className="h-[111px] bg-[#535353] pt-1">
                  <h2 className={`pl-[9px] text-[12px] leading-4 ${CJK}`}>添加调整</h2>
                  <div className="flex flex-col gap-[3px] pt-[5px] pr-[30px]">
                    {ADJ.map((row, i) => <div key={i} className="flex justify-center">{row}</div>)}
                  </div>
                </div>
              </section>

              <section className="mt-[2px] flex grow flex-col bg-[#464646]">
                <PanelTabs tabs={['图层', '通道', '路径']} active={0} />
                <div className="flex h-7 items-center bg-[#535353] px-1 pb-px">
                  <div className="relative">
                    <PickList label="图层过滤类型" options={['类型', '名称', '效果']} className="w-[71px] pl-[21px]" dim />
                    <Svg w={11} h={11} className="pointer-events-none absolute top-[5px] left-[6px]"><circle cx="6.500" cy="4.500" r="3" stroke="#b0b0b0" strokeWidth="1.300" /><path d="M4.500 6.500 1 10" stroke="#b0b0b0" strokeWidth="1.600" /></Svg>
                  </div>
                  <div className="flex pl-[15px]">{FILTERS}</div>
                  <button type="button" aria-label="打开或关闭图层过滤" className="ml-auto h-[18px] w-[9px] border border-[#333] bg-[#444]"><span className="block h-2 -translate-y-1 bg-[#757575]" /></button>
                </div>
                <div className="flex h-7 items-center border-t border-[#3a3a3a] bg-[#535353] px-1 pb-[2px] shadow-[inset_0_1px_0_#5f5f5f]">
                  <PickList label="混合模式" options={['正常', '溶解', '正片叠底']} className="w-[111px] pl-[7px]" dim />
                  <Percent id="opacity" label="不透明度:" />
                </div>
                <div className="flex h-[30px] items-center border-t border-[#3a3a3a] bg-[#535353] pr-1 pb-[3px] pl-[6px] shadow-[inset_0_1px_0_#5f5f5f]">
                  <span className={`text-[12px] text-[#c0c0c0] ${CJK}`}>锁定:</span>
                  <div className="flex pl-[6px] [&>button]:w-[22px]">{LOCKS}</div>
                  <Percent id="fill" label="填充:" />
                </div>
                <div className="flex grow">
                  <ul className="grow">
                    <li className="flex h-7 items-center border-b border-[#383838] bg-[#586577]">
                      <button type="button" aria-label="指示图层可见性" className="flex h-full w-[30px] items-center justify-center border-r border-[#3c3c3c] bg-[#535353]">
                        <Svg w={14} h={10}><path d="M1 5c3-5 9-5 12 0-3 5-9 5-12 0Z" stroke="#b9b9b9" strokeWidth="1.200" /><circle cx="7" cy="4.500" r="2.600" fill="#b9b9b9" /><circle cx="7" cy="4.500" r="1" fill="#444" /></Svg>
                      </button>
                      <span className="ml-1 h-5 w-8 border border-black bg-white" />
                      <span className={`pl-[12px] text-[12px] italic ${CJK}`}>背景</span>
                      <Svg w={16} h={16} className="mr-[14px] ml-auto"><path d="M3.500 7.500h9v6h-9zM5.500 7V5a2.500 2.500 0 0 1 5 0v2M6.500 10.500h3" stroke="#c8c8c8" strokeWidth="1.200" /></Svg>
                    </li>
                  </ul>
                  <div className="w-[15px] shrink-0 bg-linear-to-r from-[#363636] to-[#444]" />
                </div>
              </section>
            </div>
          </div>
        </div>
      </div>

      <Watermark />
      <svg width="300" height="230" viewBox="928 5 300 230" className="pointer-events-none absolute top-[5px] right-[138px]" fill="#fb3a3a" aria-hidden="true">
        <path d="m1117 12.500 1-1 82.500 58 4.500-2.500 9 17-19-2 1-5Z" />
        <path d="m928.500 177 183.500-57.500v-3.500l10.500 6-7 8.500-1.500-3.500-185 51.500Z" />
        <path d="m1042.500 225.500 95-61.500-2-2h13.500l-8 12.500-2-3-96 55.500Z" />
      </svg>
    </div>
  );
}
